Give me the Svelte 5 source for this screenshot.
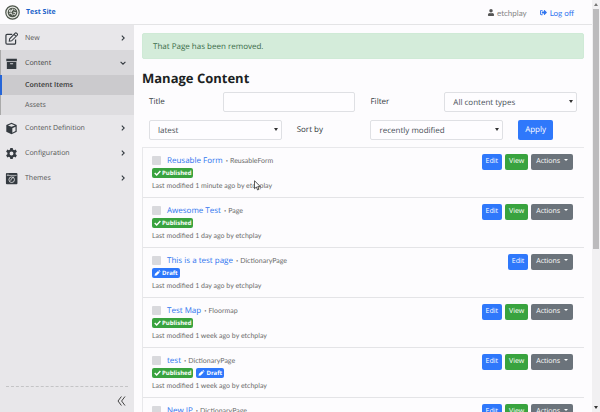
<script>
  const nav = [
    { label: 'New', icon: 'edit' },
    { label: 'Content', icon: 'archive', open: true, children: ['Content Items', 'Assets'] },
    { label: 'Content Definition', icon: 'cube' },
    { label: 'Configuration', icon: 'cog' },
    { label: 'Themes', icon: 'theme' }
  ];
  const items = [
    { title: 'Reusable Form', type: 'ReusableForm', published: true, draft: false, when: '1 minute' },
    { title: 'Awesome Test', type: 'Page', published: true, draft: false, when: '1 day' },
    { title: 'This is a test page', type: 'DictionaryPage', published: false, draft: true, when: '1 day' },
    { title: 'Test Map', type: 'Floormap', published: true, draft: false, when: '1 week' },
    { title: 'test', type: 'DictionaryPage', published: true, draft: true, when: '1 week' },
    { title: 'New IP', type: 'DictionaryPage', published: true, draft: false, when: '1 week' }
  ];
</script>

<div class="app">
  <div class="shell">
    <header>
      <a class="brand" href="#home">
        <svg class="logo" viewBox="0 0 15 15" aria-hidden="true">
          <circle cx="7.5" cy="7.5" r="6.7" fill="#e9ebe6" stroke="#4d554b" stroke-width="1.2" />
          <circle cx="7.5" cy="7.5" r="4.8" fill="#4d554b" />
          <path d="M4.5 5.2h2v1.6h-2zM8.4 4.2l2 1.2M4.2 8.8l2.2-.8 1 2.4M8.2 7.2l2.6.4-1 2.2-1.6-.6M7.4 3.6v2.2" fill="none" stroke="#f0f2ee" stroke-width=".9" />
        </svg>
        <span>Test Site</span>
      </a>
      <nav class="account" aria-label="Account">
        <span class="user">
          <svg viewBox="0 0 448 512" aria-hidden="true"><path fill="#555" d="M224 256a128 128 0 1 0 0-256 128 128 0 0 0 0 256zm90 32h-17a174 174 0 0 1-146 0h-17A134 134 0 0 0 0 422v42c0 27 21 48 48 48h352c27 0 48-21 48-48v-42a134 134 0 0 0-134-134z" /></svg>
          etchplay
        </span>
        <a class="logoff" href="#logoff">
          <svg viewBox="0 0 512 512" aria-hidden="true"><path fill="currentColor" d="M497 273 329 441c-15 15-41 4-41-17v-96H152c-13 0-24-11-24-24v-96c0-13 11-24 24-24h136V88c0-21 26-32 41-17l168 168c9 9 9 25 0 34zM192 436v-40c0-7-5-12-12-12H96c-18 0-32-14-32-32V160c0-18 14-32 32-32h84c7 0 12-5 12-12V76c0-7-5-12-12-12H96a96 96 0 0 0-96 96v192a96 96 0 0 0 96 96h84c7 0 12-5 12-12z" /></svg>
          Log off
        </a>
      </nav>
    </header>

    <div class="body">
      <aside>
        <ul>
          {#each nav as entry}
            <li class:open={entry.open}>
              <a class="entry" href="#{entry.icon}">
                <svg class="icon" viewBox="0 0 14 14" aria-hidden="true">
                  {#if entry.icon === 'edit'}
                    <path d="M7.8 2.6H2.2a1.2 1.2 0 0 0-1.2 1.2v8a1.2 1.2 0 0 0 1.2 1.2h8a1.2 1.2 0 0 0 1.2-1.2V8" fill="none" stroke="#343a40" stroke-width="1.3" />
                    <path d="M4.6 9.8l.4-2.5 6-6a1 1 0 0 1 1.4 0l.8.8a1 1 0 0 1 0 1.4l-6 6zM9.8 2.6l2.1 2.1" fill="none" stroke="#343a40" stroke-width="1.1" />
                  {:else if entry.icon === 'archive'}
                    <path d="M1.4 2h11.4v2.6H1.4zM2 5.4h10.2v7.4H2z" fill="#343a40" />
                    <rect x="5.4" y="6.6" width="3.4" height="1.1" rx=".5" fill="#d9d9dc" />
                  {:else if entry.icon === 'cube'}
                    <path d="M7 .8l5.6 2.4v7.4L7 13.3l-5.6-2.7V3.2z" fill="#343a40" />
                    <path d="M3.2 3.7L7 2.2l3.8 1.5L7 5.2zM7.9 6.6l3.4-1.5v4.7l-3.4 1.7z" fill="#e6e6e8" />
                  {:else if entry.icon === 'cog'}
                    <path fill="#343a40" fill-rule="evenodd" d="M5.7 1h2.6l.3 1.7 1.2.7 1.7-.6 1.3 2.2-1.4 1.2v1.6l1.4 1.2-1.3 2.2-1.7-.6-1.2.7-.3 1.7H5.7l-.3-1.7-1.2-.7-1.7.6L1.2 9l1.4-1.2V6.2L1.2 5l1.3-2.2 1.7.6 1.2-.7zM7 4.9a2.1 2.1 0 1 0 0 4.2 2.1 2.1 0 0 0 0-4.2z" />
                  {:else}
                    <rect x="1" y="1.2" width="12.4" height="12" rx="1" fill="#343a40" />
                    <path d="M2 3.7h10.5M2.6 2.4h1.2" stroke="#e6e6e8" stroke-width=".7" />
                    <circle cx="7.2" cy="8.3" r="3" fill="none" stroke="#e6e6e8" stroke-width=".9" />
                    <path d="M6.2 9.3l.5-1.6 2.8-2.8" fill="none" stroke="#e6e6e8" stroke-width="1" />
                  {/if}
                </svg>
                <span class="label">{entry.label}</span>
                <svg class="chev" viewBox="0 0 6 6" aria-hidden="true">
                  <path d={entry.open ? 'M.6 1.8L3 4.2l2.4-2.4' : 'M1.8.6L4.2 3 1.8 5.4'} fill="none" stroke="#343a40" stroke-width="1.1" />
                </svg>
              </a>
              {#if entry.children}
                <ul class="sub">
                  {#each entry.children as child, i}
                    <li><a class="child" class:active={i === 0} href="#child{i}">{child}</a></li>
                  {/each}
                </ul>
              {/if}
            </li>
          {/each}
        </ul>
        <div class="foot">
          <button class="collapse" aria-label="Collapse menu">
            <svg viewBox="0 0 9 10" aria-hidden="true"><path d="M4.4.5L1 5l3.4 4.5M8 .5L4.6 5 8 9.5" fill="none" stroke="#444" stroke-width="1" /></svg>
          </button>
        </div>
      </aside>

      <main>
        <div class="alert" role="alert">That Page has been removed.</div>
        <h1>Manage Content</h1>
        <form>
          <label for="title">Title</label>
          <input id="title" class="wide" type="text" />
          <label for="filter">Filter</label>
          <span class="select wide"><select id="filter"><option>All content types</option></select></span>
          <span class="select wide"><select aria-label="Version"><option>latest</option></select></span>
          <label for="sort">Sort by</label>
          <span class="select wide"><select id="sort"><option>recently modified</option></select></span>
          <button class="apply" type="button">Apply</button>
        </form>

        <ul class="list">
          {#each items as item}
            <li>
              <div class="info">
                <div class="name">
                  <input type="checkbox" aria-label="Select {item.title}" />
                  <a href="#item">{item.title}</a>
                  <span class="dot">•</span>
                  <span class="type">{item.type}</span>
                </div>
                <div class="badges">
                  {#if item.published}
                    <span class="badge green"><svg viewBox="0 0 7 6" aria-hidden="true"><path d="M.7 3l2 2L6.4 1" fill="none" stroke="#fff" stroke-width="1.4" /></svg>Published</span>
                  {/if}
                  {#if item.draft}
                    <span class="badge blue"><svg viewBox="0 0 7 6" aria-hidden="true"><path d="M.5 5.8l.5-2L4 .9l1.6 1.5-3 3zM4.5.5L5.2 0l1.3 1.3-.5.7z" fill="#fff" /></svg>Draft</span>
                  {/if}
                </div>
                <div class="meta">Last modified {item.when} ago by etchplay</div>
              </div>
              <div class="actions">
                <button class="blue">Edit</button>
                {#if item.published}<button class="green">View</button>{/if}
                <button class="gray">Actions <i></i></button>
              </div>
            </li>
          {/each}
        </ul>
      </main>
    </div>
  </div>

  <div class="scroll" aria-hidden="true">
    <i class="up"></i>
    <div class="track"><div class="thumb"></div></div>
    <i class="down"></i>
  </div>

  <svg class="pointer" viewBox="0 0 7 11" aria-hidden="true"><path d="M.5.7v8l1.9-1.7 1.2 3 1.3-.6-1.2-2.8h2.6z" fill="#fff" stroke="#333" stroke-width=".8" /></svg>
</div>

<style>
  :global(body) { margin: 0; }
  * { box-sizing: border-box; }
  .app {
    position: relative;
    display: flex;
    height: 100vh;
    overflow: hidden;
    background: #fdfcfe;
    color: #343a40;
    font: 8px/12px "Open Sans", "Noto Sans", sans-serif;
    text-rendering: geometricPrecision;
  }
  .shell { flex: 1; min-width: 0; display: flex; flex-direction: column; }
  ul { list-style: none; margin: 0; padding: 0; }
  a { color: #2f74ef; text-decoration: none; }
  button, input, select { font: inherit; margin: 0; text-rendering: inherit; }

  header {
    flex: none;
    height: 25px;
    display: flex;
    align-items: center;
    justify-content: space-between;
    padding: 0 18px 0 5px;
    border-bottom: 1px solid #e4e4e6;
  }
  .brand { display: flex; align-items: center; gap: 6px; color: #1a62c9; font-size: 7px; font-weight: 700; }
  .brand span { padding-top: 1px; }
  .logo { width: 15px; height: 15px; }
  .account { display: flex; gap: 13px; font-family: Lato, sans-serif; padding-top: 1px; }
  .user, .logoff { display: flex; align-items: center; gap: 2px; }
  .user { color: #858585; }
  .logoff { gap: 3px; }
  .user svg, .logoff svg { width: 7px; height: 7px; }
  .user svg { width: 8px; }

  .body { flex: 1; min-height: 0; display: flex; }
  aside {
    flex: 0 0 134px;
    display: flex;
    flex-direction: column;
    justify-content: space-between;
    background: #e8e7ea;
    font-size: 7px;
  }
  .entry {
    display: flex;
    align-items: center;
    height: 25px;
    padding: 1px 8px 0 5px;
    color: #555;
  }
  .open { background: #dedde0; border-left: 1px solid #aaa; }
  .open .entry { padding-left: 4px; background: #d9d8db; color: #444; }
  .icon { width: 13px; height: 13px; margin-right: 7px; }
  .label { flex: 1; padding-top: 1px; }
  .chev { width: 6px; height: 6px; }
  .child {
    display: flex;
    align-items: center;
    height: 20px;
    padding: 2px 0 0 24px;
    color: #555;
  }
  .child.active {
    background: #cbcacd;
    color: #333;
    font-weight: 600;
    box-shadow: -1px 0 #2565d8, inset 1px 0 #2565d8;
  }
  .foot { margin: 0 6px; border-top: 1px dashed #c4c4c6; display: flex; justify-content: flex-end; }
  .collapse { border: 0; background: none; padding: 9px 2px 6px; line-height: 0; }
  .collapse svg { width: 9px; height: 10px; }

  main { flex: 1; min-width: 0; padding: 8px 8px 0; overflow: hidden; }
  .alert {
    padding: 7px 10px 5px;
    border: 1px solid #cfead6;
    border-radius: 2px;
    background: #d4ecda;
    color: #3a6b48;
    line-height: 12px;
  }
  h1 { margin: 10px 0 5px; font-size: 13px; line-height: 18px; font-weight: 700; color: #1c1f23; }
  form {
    display: grid;
    grid-template-columns: repeat(6, minmax(0, 1fr));
    column-gap: 15px;
    row-gap: 8px;
    padding: 0 7px;
    align-items: center;
  }
  .wide { grid-column: span 2; }
  #title, select {
    display: block;
    width: 100%;
    height: 20px;
    border: 1px solid #dfe0e4;
    border-radius: 2px;
    background: #fefdff;
    color: #495057;
  }
  #title { padding: 0 8px; }
  select { appearance: none; padding: 1px 8px 0; }
  .select { position: relative; }
  .select::after {
    content: "";
    position: absolute;
    right: 4px;
    top: 8px;
    border: 2px solid transparent;
    border-top: 3px solid #333;
    border-bottom: 0;
  }
  button { border: 0; border-radius: 2px; color: #fff; white-space: nowrap; }
  .apply { justify-self: start; height: 20px; padding: 0 7px; background: #2f78fb; }
  .blue { background: #2f78fb; }
  .green { background: #39a33f; }
  .gray { background: #6b737b; }

  .list { margin-top: 7px; border: 1px solid #e8e8eb; border-width: 1px 0 0 1px; }
  .list > li {
    display: flex;
    justify-content: space-between;
    height: 50px;
    padding: 6px 11px 0 9px;
    border-bottom: 1px solid #e4e4e7;
  }
  .name { display: flex; align-items: center; height: 13px; }
  .name input { appearance: none; width: 9px; height: 9px; margin-right: 6px; border-radius: 1px; background: #d9d9dd; }
  .type, .meta { font-family: Lato, sans-serif; font-size: 7px; color: #6c6c6c; }
  .dot { margin: 0 2px 0 3px; font-size: 6px; color: #666; }
  .badges { display: flex; gap: 3px; margin-top: 1px; }
  .badge {
    display: flex;
    align-items: center;
    gap: 1px;
    height: 10px;
    padding: 0 2px;
    border-radius: 2px;
    color: #fff;
    font-size: 6px;
    font-weight: 700;
  }
  .badge svg { width: 7px; height: 6px; }
  .meta { margin-top: 2px; }
  .actions { display: flex; align-items: flex-start; gap: 3px; }
  .actions button { height: 16px; padding: 0 4px; font-size: 7px; }
  .actions .gray { padding: 0 5px; }
  .actions i {
    display: inline-block;
    margin-left: 2px;
    vertical-align: 2px;
    border: 2px solid transparent;
    border-top-color: #fff;
    border-bottom: 0;
  }

  .scroll {
    flex: 0 0 8px;
    display: flex;
    flex-direction: column;
    align-items: center;
    background: #f1f0f2;
  }
  .up, .down { margin: 3px 0; border: 2px solid transparent; }
  .up { border-bottom: 3px solid #777; border-top: 0; }
  .down { border-top: 3px solid #333; border-bottom: 0; }
  .track { flex: 1; width: 6px; }
  .thumb { height: 61%; background: #bcbbbd; }
  .pointer { position: absolute; left: 254px; top: 180px; width: 7px; height: 11px; }
</style>
